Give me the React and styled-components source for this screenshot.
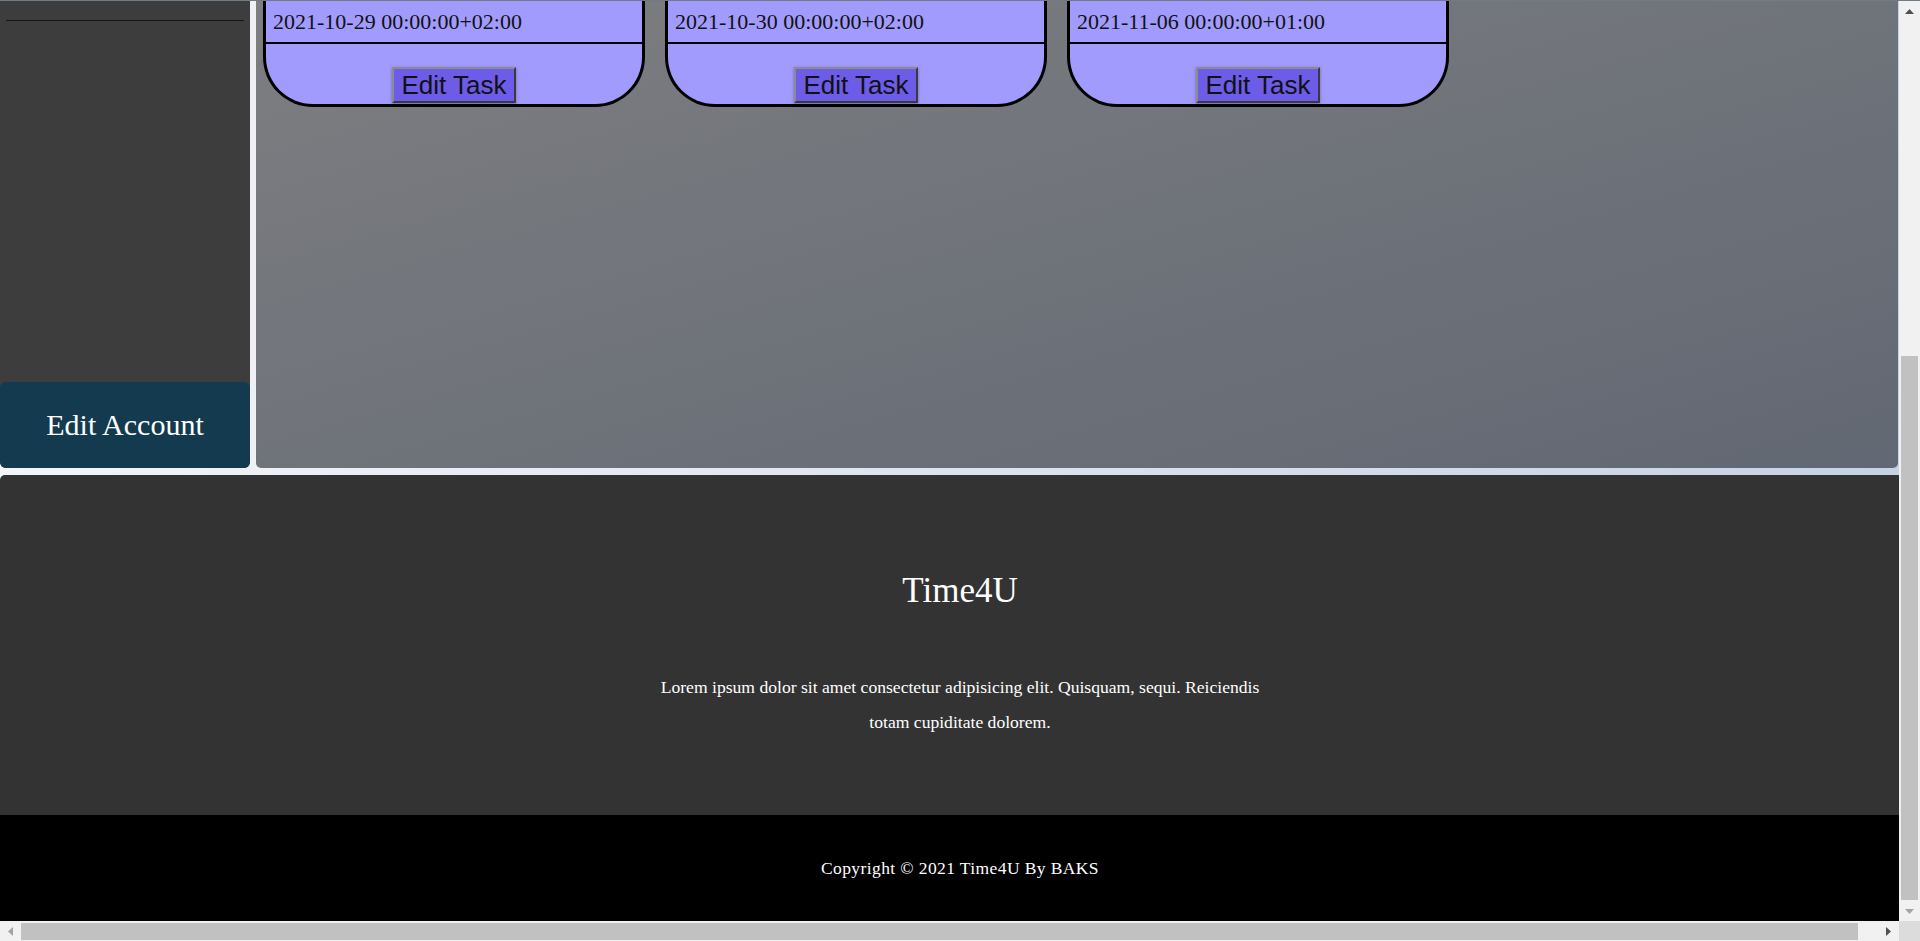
import React from 'react'
import styled, { createGlobalStyle } from 'styled-components'

const GlobalStyle = createGlobalStyle`
  html,
  body {
    margin: 0;
    padding: 0;
    overflow: hidden;
  }

  body {
    font-family: 'Liberation Serif', 'Times New Roman', serif;
  }
`

const TASKS = [
  { id: 1, due: '2021-10-29 00:00:00+02:00' },
  { id: 2, due: '2021-10-30 00:00:00+02:00' },
  { id: 3, due: '2021-11-06 00:00:00+01:00' },
]

const Frame = styled.div`
  width: 100vw;
  height: 100vh;
  box-sizing: border-box;
  border-top: 1px solid #6f7c86;
  display: grid;
  grid-template-columns: 1fr 21px;
  grid-template-rows: 1fr 20px;
`

const Viewport = styled.div`
  overflow: hidden;
  background: linear-gradient(to right, #f4f5f9, #c7d2e5);
`

const Page = styled.div`
  width: 1920px;
  display: flex;
  flex-direction: column;
`

const Dashboard = styled.div`
  display: flex;
  gap: 6px;
  height: 467px;
  margin-right: 22px;
`

const Sidebar = styled.aside`
  width: 250px;
  flex-shrink: 0;
  background: #3d3d3d;
  border-radius: 0 0 6px 6px;
  display: flex;
  flex-direction: column;
`

const Divider = styled.hr`
  margin: 19px 6px 0;
  border: none;
  height: 1px;
  background: #161616;
`

const EditAccountButton = styled.button`
  margin-top: auto;
  height: 86px;
  border: none;
  border-radius: 6px;
  background: #133a4f;
  color: #fff;
  font-family: 'Liberation Serif', 'Times New Roman', serif;
  font-size: 30px;
  cursor: pointer;
`

const Main = styled.main`
  flex: 1;
  padding: 0 7px;
  border-radius: 0 0 5px 5px;
  background: linear-gradient(to bottom right, #7d7e81, #626873);
  display: flex;
  align-items: flex-start;
  gap: 20px;
`

const Card = styled.div`
  box-sizing: border-box;
  width: 382px;
  border: 3px solid #000;
  border-top: none;
  border-radius: 0 0 50px 50px;
  background: #a29bfe;
  display: flex;
  flex-direction: column;
`

const DateRow = styled.div`
  height: 41px;
  padding-left: 7px;
  border-bottom: 2px solid #000;
  display: flex;
  align-items: center;
  font-size: 22px;
  color: #111;
`

const ActionRow = styled.div`
  display: flex;
  justify-content: center;
  padding: 23px 0 1px;
`

const EditTaskButton = styled.button`
  box-sizing: border-box;
  height: 36px;
  padding: 0 7px;
  background: #6c5ce7;
  border: 2px solid;
  border-color: #8c8c8c #3a3a3a #3a3a3a #8c8c8c;
  box-shadow: 0 1px 3px rgba(0, 0, 0, 0.35);
  font-family: 'Liberation Sans', Arial, sans-serif;
  font-size: 26px;
  color: #111;
  cursor: pointer;
`

const Footer = styled.footer`
  height: 340px;
  margin-top: 7px;
  box-sizing: border-box;
  padding-top: 96px;
  border-radius: 5px 5px 0 0;
  background: #333333;
  color: #fff;
  text-align: center;
`

const FooterTitle = styled.h2`
  margin: 0;
  font-size: 35px;
  font-weight: normal;
  line-height: 39px;
`

const FooterText = styled.p`
  margin: 60px auto 0;
  max-width: 620px;
  font-size: 17.6px;
  line-height: 35px;
`

const Copyright = styled.div`
  height: 106px;
  background: #000;
  color: #fff;
  display: flex;
  align-items: center;
  justify-content: center;
  font-size: 17.5px;
  letter-spacing: 0.4px;
`

const VScroll = styled.div`
  background: #f1f1f1;
  display: flex;
  flex-direction: column;
`

const HScroll = styled.div`
  background: #f1f1f1;
  display: flex;
`

const ArrowButton = styled.div`
  flex-shrink: 0;
  width: ${({ $horizontal }) => ($horizontal ? '21px' : '100%')};
  height: ${({ $horizontal }) => ($horizontal ? '100%' : '20px')};
  display: flex;
  align-items: center;
  justify-content: center;
`

const Track = styled.div`
  flex: 1;
  display: flex;
  flex-direction: ${({ $horizontal }) => ($horizontal ? 'row' : 'column')};
  justify-content: ${({ $end }) => ($end ? 'flex-end' : 'flex-start')};
`

const Thumb = styled.div`
  background: #c1c1c1;
  margin: ${({ $horizontal }) => ($horizontal ? '2px 0 1px' : '0 2px 1px')};
`

const Corner = styled.div`
  background: #dcdcdc;
`

const Arrow = ({ dir, active }) => {
  const points = {
    up: '0,5 4.5,0 9,5',
    down: '0,0 9,0 4.5,5',
    left: '5,0 5,9 0,4.5',
    right: '0,0 5,4.5 0,9',
  }[dir]
  const vertical = dir === 'up' || dir === 'down'
  return (
    <svg width={vertical ? 9 : 5} height={vertical ? 5 : 9}>
      <polygon points={points} fill={active ? '#505050' : '#a3a3a3'} />
    </svg>
  )
}

const TaskCard = ({ due }) => (
  <Card>
    <DateRow>{due}</DateRow>
    <ActionRow>
      <EditTaskButton>Edit Task</EditTaskButton>
    </ActionRow>
  </Card>
)

export default function App() {
  return (
    <>
      <GlobalStyle />
      <Frame>
        <Viewport>
          <Page>
            <Dashboard>
              <Sidebar>
                <Divider />
                <EditAccountButton>Edit Account</EditAccountButton>
              </Sidebar>
              <Main>
                {TASKS.map((task) => (
                  <TaskCard key={task.id} due={task.due} />
                ))}
              </Main>
            </Dashboard>
            <Footer>
              <FooterTitle>Time4U</FooterTitle>
              <FooterText>
                Lorem ipsum dolor sit amet consectetur adipisicing elit.
                Quisquam, sequi. Reiciendis totam cupiditate dolorem.
              </FooterText>
            </Footer>
            <Copyright>Copyright © 2021 Time4U By BAKS</Copyright>
          </Page>
        </Viewport>
        <VScroll>
          <ArrowButton>
            <Arrow dir='up' active />
          </ArrowButton>
          <Track $end>
            <Thumb style={{ height: 544 }} />
          </Track>
          <ArrowButton>
            <Arrow dir='down' />
          </ArrowButton>
        </VScroll>
        <HScroll>
          <ArrowButton $horizontal>
            <Arrow dir='left' />
          </ArrowButton>
          <Track $horizontal>
            <Thumb $horizontal style={{ width: 1837 }} />
          </Track>
          <ArrowButton $horizontal>
            <Arrow dir='right' active />
          </ArrowButton>
        </HScroll>
        <Corner />
      </Frame>
    </>
  )
}
